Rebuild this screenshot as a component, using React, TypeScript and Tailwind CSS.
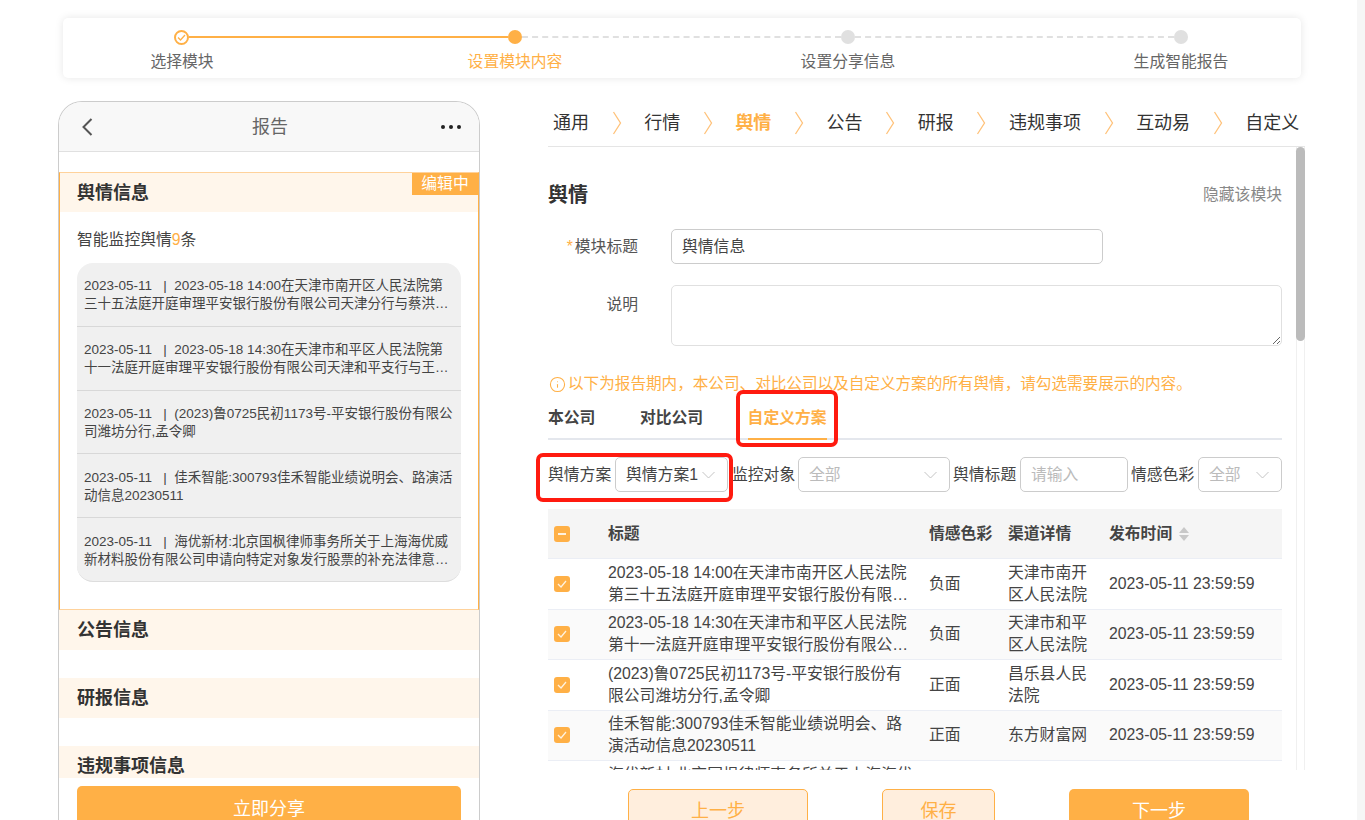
import { Info } from 'lucide-react';

const tabs = ['通用', '行情', '舆情', '公告', '研报', '违规事项', '互动易', '自定义'];

const previews = [
  '2023-05-11\u00a0\u00a0\u00a0|\u00a0\u00a02023-05-18 14:00在天津市南开区人民法院第三十五法庭开庭审理平安银行股份有限公司天津分行与蔡洪…',
  '2023-05-11\u00a0\u00a0\u00a0|\u00a0\u00a02023-05-18 14:30在天津市和平区人民法院第十一法庭开庭审理平安银行股份有限公司天津和平支行与王…',
  '2023-05-11\u00a0\u00a0\u00a0|\u00a0\u00a0(2023)鲁0725民初1173号-平安银行股份有限公司潍坊分行,孟令卿',
  '2023-05-11\u00a0\u00a0\u00a0|\u00a0\u00a0佳禾智能:300793佳禾智能业绩说明会、路演活动信息20230511',
  '2023-05-11\u00a0\u00a0\u00a0|\u00a0\u00a0海优新材:北京国枫律师事务所关于上海海优威新材料股份有限公司申请向特定对象发行股票的补充法律意…',
];

const rows = [
  {
    title: '2023-05-18 14:00在天津市南开区人民法院第三十五法庭开庭审理平安银行股份有限…',
    tone: '负面',
    source: '天津市南开区人民法院',
  },
  {
    title: '2023-05-18 14:30在天津市和平区人民法院第十一法庭开庭审理平安银行股份有限公…',
    tone: '负面',
    source: '天津市和平区人民法院',
  },
  {
    title: '(2023)鲁0725民初1173号-平安银行股份有限公司潍坊分行,孟令卿',
    tone: '正面',
    source: '昌乐县人民法院',
  },
  {
    title: '佳禾智能:300793佳禾智能业绩说明会、路演活动信息20230511',
    tone: '正面',
    source: '东方财富网',
  },
];

function Separator() {
  return (
    <svg width="10" height="24" viewBox="0 0 10 24" fill="none" className="shrink-0">
      <path d="M1.5 1 L8.5 12 L1.5 23" stroke="#ffc27a" strokeWidth="1.3" />
    </svg>
  );
}

function Checkbox() {
  return (
    <div className="w-4 h-4 rounded-[3px] bg-[#ffb046] flex items-center justify-center">
      <svg width="10" height="8" viewBox="0 0 10 8" fill="none">
        <path d="M1 4 L4 7 L9 1" stroke="#fff2e0" strokeWidth="1.3" />
      </svg>
    </div>
  );
}

function Select({ value, width, muted }: { value: string; width: string; muted?: boolean }) {
  return (
    <div
      className={`${width} h-[35px] shrink-0 border border-[#ccc] rounded-[5px] flex items-center justify-between pl-[10px] pr-[12px] ${
        muted ? 'text-[#bbb]' : 'text-[#444]'
      }`}
    >
      <span className="whitespace-nowrap">{value}</span>
      <svg width="13" height="8" viewBox="0 0 13 8" fill="none" className="shrink-0">
        <path d="M0.5 1 L6.5 7 L12.5 1" stroke="#c4c4c4" strokeWidth="1" />
      </svg>
    </div>
  );
}

function Stepper() {
  return (
    <div className="ml-[63px] w-[1238px] h-[60px] rounded-[5px] bg-white shadow-[0_0_8px_rgba(0,0,0,0.1)] pt-[12px]">
      <div className="flex items-center h-[14px] pl-[111px]">
        <div className="w-[15px] h-[15px] shrink-0 rounded-full border-2 border-[#ffb046] flex items-center justify-center">
          <svg width="9" height="7" viewBox="0 0 9 7" fill="none">
            <path d="M1 3.5 L3.5 6 L8 1" stroke="#ffb046" strokeWidth="1.3" />
          </svg>
        </div>
        <div className="w-[319px] h-[2px] bg-[#ffb046]" />
        <div className="w-[14px] h-[14px] shrink-0 rounded-full bg-[#ffb046]" />
        <div className="w-[319px] border-t-2 border-dashed border-[#e0e0e0]" />
        <div className="w-[14px] h-[14px] shrink-0 rounded-full bg-[#e0e0e0]" />
        <div className="w-[319px] border-t-2 border-dashed border-[#e0e0e0]" />
        <div className="w-[14px] h-[14px] shrink-0 rounded-full bg-[#e0e0e0]" />
      </div>
      <div className="flex gap-[133px] pl-[19px] mt-[7px] text-[#666] leading-[22px]">
        <div className="w-[200px] text-center">选择模块</div>
        <div className="w-[200px] text-center text-[#ffb046]">设置模块内容</div>
        <div className="w-[200px] text-center">设置分享信息</div>
        <div className="w-[200px] text-center">生成智能报告</div>
      </div>
    </div>
  );
}

function Phone() {
  return (
    <div className="ml-[58px] w-[422px] h-[719px] shrink-0 border border-b-0 border-[#ccc] rounded-t-[24px] overflow-hidden">
      <div className="h-[50px] bg-[#f8f8f8] border-b border-[#e0e0e0] flex items-center justify-between pl-[22px] pr-[18px]">
        <svg width="12" height="20" viewBox="0 0 12 20" fill="none">
          <path d="M10.5 2 L2.5 10 L10.5 18" stroke="#555" strokeWidth="2" />
        </svg>
        <span className="ml-[6px] text-lg text-[#666]">报告</span>
        <div className="flex gap-[4px]">
          <div className="w-1 h-1 rounded-full bg-[#222]" />
          <div className="w-1 h-1 rounded-full bg-[#222]" />
          <div className="w-1 h-1 rounded-full bg-[#222]" />
        </div>
      </div>
      <div className="h-[626px] overflow-hidden pt-[20px]">
        <div className="relative h-[438px] border border-[#ffb046] border-t-[#ffd29b] border-b-[#ffd29b]">
          <div className="h-[39px] bg-[#fff6eb] pl-[17px] flex items-center text-lg font-bold text-[#333]">舆情信息</div>
          <div className="absolute top-0 right-0 w-[66px] h-[22px] bg-[#ffb046] text-white text-center leading-[22px]">编辑中</div>
          <div className="pl-[17px] mt-[17px] leading-[22px] text-[#444]">
            智能监控舆情<span className="text-[#ffb046]">9</span>条
          </div>
          <div className="mx-[17px] mt-[12px] h-[319px] rounded-[16px] bg-[#f0f0f0] overflow-hidden border-b border-[#ddd]">
            {previews.map((text, i) => (
              <div
                key={i}
                className="h-[63.8px] px-[7px] pt-[2px] flex items-center text-[13.5px] leading-[18px] text-[#444] border-b border-[#d8d8d8] last:border-b-0"
              >
                <p className="line-clamp-2">{text}</p>
              </div>
            ))}
          </div>
        </div>
        {['公告信息', '研报信息', '违规事项信息'].map((name, i) => (
          <div
            key={name}
            className={`h-[40px] bg-[#fff6eb] pl-[18px] flex items-center text-lg font-bold text-[#333] ${
              i > 0 ? 'mt-[28px]' : ''
            }`}
          >
            {name}
          </div>
        ))}
      </div>
      <div className="mx-[18px] mt-[8px] h-[50px] rounded-[5px] bg-[#ffb046] text-white text-lg text-center leading-[46px]">
        立即分享
      </div>
    </div>
  );
}

function OpinionTable() {
  return (
    <div className="mt-[17px] h-[261px] overflow-hidden text-[#444]">
      <div className="grid grid-cols-[60px_321px_79px_101px_173px] h-[50px] items-center bg-[#f5f5f5] border-b border-[#ebeef5] font-bold">
        <div className="pl-[6px]">
          <div className="w-4 h-4 rounded-[3px] bg-[#ffb046] flex items-center justify-center">
            <div className="w-[8px] h-[2px] bg-[#fff2e0]" />
          </div>
        </div>
        <div>标题</div>
        <div>情感色彩</div>
        <div>渠道详情</div>
        <div className="flex items-center gap-[6px]">
          发布时间
          <svg width="12" height="16" viewBox="0 0 12 16" fill="#c8c8c8">
            <path d="M6 1 L11 7 L1 7 Z" />
            <path d="M6 15 L11 9 L1 9 Z" />
          </svg>
        </div>
      </div>
      {rows.map((row, i) => (
        <div
          key={i}
          className={`grid grid-cols-[60px_321px_79px_101px_173px] h-[50.5px] items-center border-b border-[#ebeef5] leading-[22px] ${
            i % 2 === 1 ? 'bg-[#fafafa]' : 'bg-white'
          }`}
        >
          <div className="pl-[6px]">
            <Checkbox />
          </div>
          <div className="w-[305px] line-clamp-2">{row.title}</div>
          <div>{row.tone}</div>
          <div className="w-[88px]">{row.source}</div>
          <div>2023-05-11 23:59:59</div>
        </div>
      ))}
      <div className="pl-[60px] pt-[3px] leading-[22px]">
        <div className="w-[305px] whitespace-nowrap overflow-hidden">海优新材:北京国枫律师事务所关于上海海优</div>
      </div>
    </div>
  );
}

function FormPanel() {
  return (
    <div className="ml-[68px] w-[757px] shrink-0">
      <div className="h-[46px] pb-[2px] border-b border-[#e5e5e5] flex items-center gap-[22.6px] pl-[5px] text-lg text-[#333]">
        {tabs.map((tab, i) => (
          <div key={tab} className="contents">
            {i > 0 && <Separator />}
            <span className={`whitespace-nowrap ${tab === '舆情' ? 'font-bold text-[#ffb046]' : ''}`}>{tab}</span>
          </div>
        ))}
      </div>
      <div className="flex h-[623px]">
        <div className="w-[748px] shrink-0 pr-[14px]">
          <div className="mt-[34px] h-[28px] flex items-center justify-between">
            <span className="text-xl font-bold text-[#333]">舆情</span>
            <span className="text-[#888]">隐藏该模块</span>
          </div>
          <div className="mt-[20px] flex items-center h-[35px]">
            <label className="w-[90px] text-right text-[#555]">
              <span className="mr-[2px] text-[#ffb046]">*</span>模块标题
            </label>
            <input
              readOnly
              value="舆情信息"
              className="ml-[33px] w-[432px] h-[35px] border border-[#ccc] rounded-[5px] px-[10px] pb-[2px] text-[#444] outline-none"
            />
          </div>
          <div className="mt-[21px] flex items-start h-[61px]">
            <label className="w-[90px] pt-[9px] text-right text-[#555] leading-[22px]">说明</label>
            <textarea
              readOnly
              className="ml-[33px] w-[611px] h-[61px] border border-[#e0e0e0] rounded-[5px] outline-none block"
            />
          </div>
          <div className="mt-[27px] h-[22px] flex items-center gap-[2px] text-[15.6px] text-[#ffb046] whitespace-nowrap">
            <Info className="w-[17px] h-[17px] ml-[1px] shrink-0" strokeWidth={1.5} />
            以下为报告期内，本公司、对比公司以及自定义方案的所有舆情，请勾选需要展示的内容。
          </div>
          <div className="h-[45px] border-b-2 border-[#e4e7ed] flex gap-[44.5px] font-bold text-[#444]">
            <div className="h-[45px] pt-[12px] leading-[22px]">本公司</div>
            <div className="h-[45px] pt-[12px] leading-[22px]">对比公司</div>
            <div className="relative h-[45px] pt-[12px] leading-[22px] text-[#ffb046] border-b-2 border-[#ffb046]">
              自定义方案
              <div className="absolute left-[-12px] right-[-11px] top-[-5px] bottom-[-9px] border-4 border-[#ff1a0f] rounded-[7px]" />
            </div>
          </div>
          <div className="relative mt-[17px] h-[35px] flex items-center gap-[3px] text-[#444] whitespace-nowrap">
            <span className="w-[64px]">舆情方案</span>
            <Select value="舆情方案1" width="w-[113px]" />
            <span className="w-[64px] pl-px">监控对象</span>
            <Select value="全部" width="w-[152px]" muted />
            <span className="w-[64px]">舆情标题</span>
            <input
              placeholder="请输入"
              className="w-[108px] h-[35px] shrink-0 border border-[#ccc] rounded-[5px] px-[10px] outline-none placeholder:text-[#bbb]"
            />
            <span className="w-[64px]">情感色彩</span>
            <Select value="全部" width="w-[84px]" muted />
            <div className="absolute left-[-12px] top-[-4px] w-[197px] h-[49px] border-4 border-[#ff1a0f] rounded-[7px]" />
          </div>
          <OpinionTable />
        </div>
        <div className="w-[9px] shrink-0 border-x border-[#f0f0f0]">
          <div className="w-[9px] -ml-px h-[194px] rounded-full bg-[#bbb]" />
        </div>
      </div>
      <div className="flex mt-[19px] text-lg text-center">
        <div className="ml-[80px] w-[180px] h-[50px] rounded-[5px] border border-[#ffb046] bg-[#ffeedd] text-[#ffb046] leading-[42px]">上一步</div>
        <div className="ml-[74px] w-[113px] h-[50px] rounded-[5px] border border-[#ffb046] bg-[#ffeedd] text-[#ffb046] leading-[42px]">保存</div>
        <div className="ml-[74px] w-[180px] h-[50px] rounded-[5px] bg-[#ffb046] text-white leading-[44px]">下一步</div>
      </div>
    </div>
  );
}

export default function App() {
  return (
    <div className="w-[1365px] h-[820px] overflow-hidden flex bg-white text-[15.8px] font-['Liberation_Sans','Noto_Sans_CJK_SC',sans-serif]">
      <div className="w-[1357px] shrink-0 pt-[18px]">
        <Stepper />
        <div className="mt-[23px] flex">
          <Phone />
          <FormPanel />
        </div>
      </div>
      <div className="flex-1 bg-[#f6f6f6]" />
    </div>
  );
}
